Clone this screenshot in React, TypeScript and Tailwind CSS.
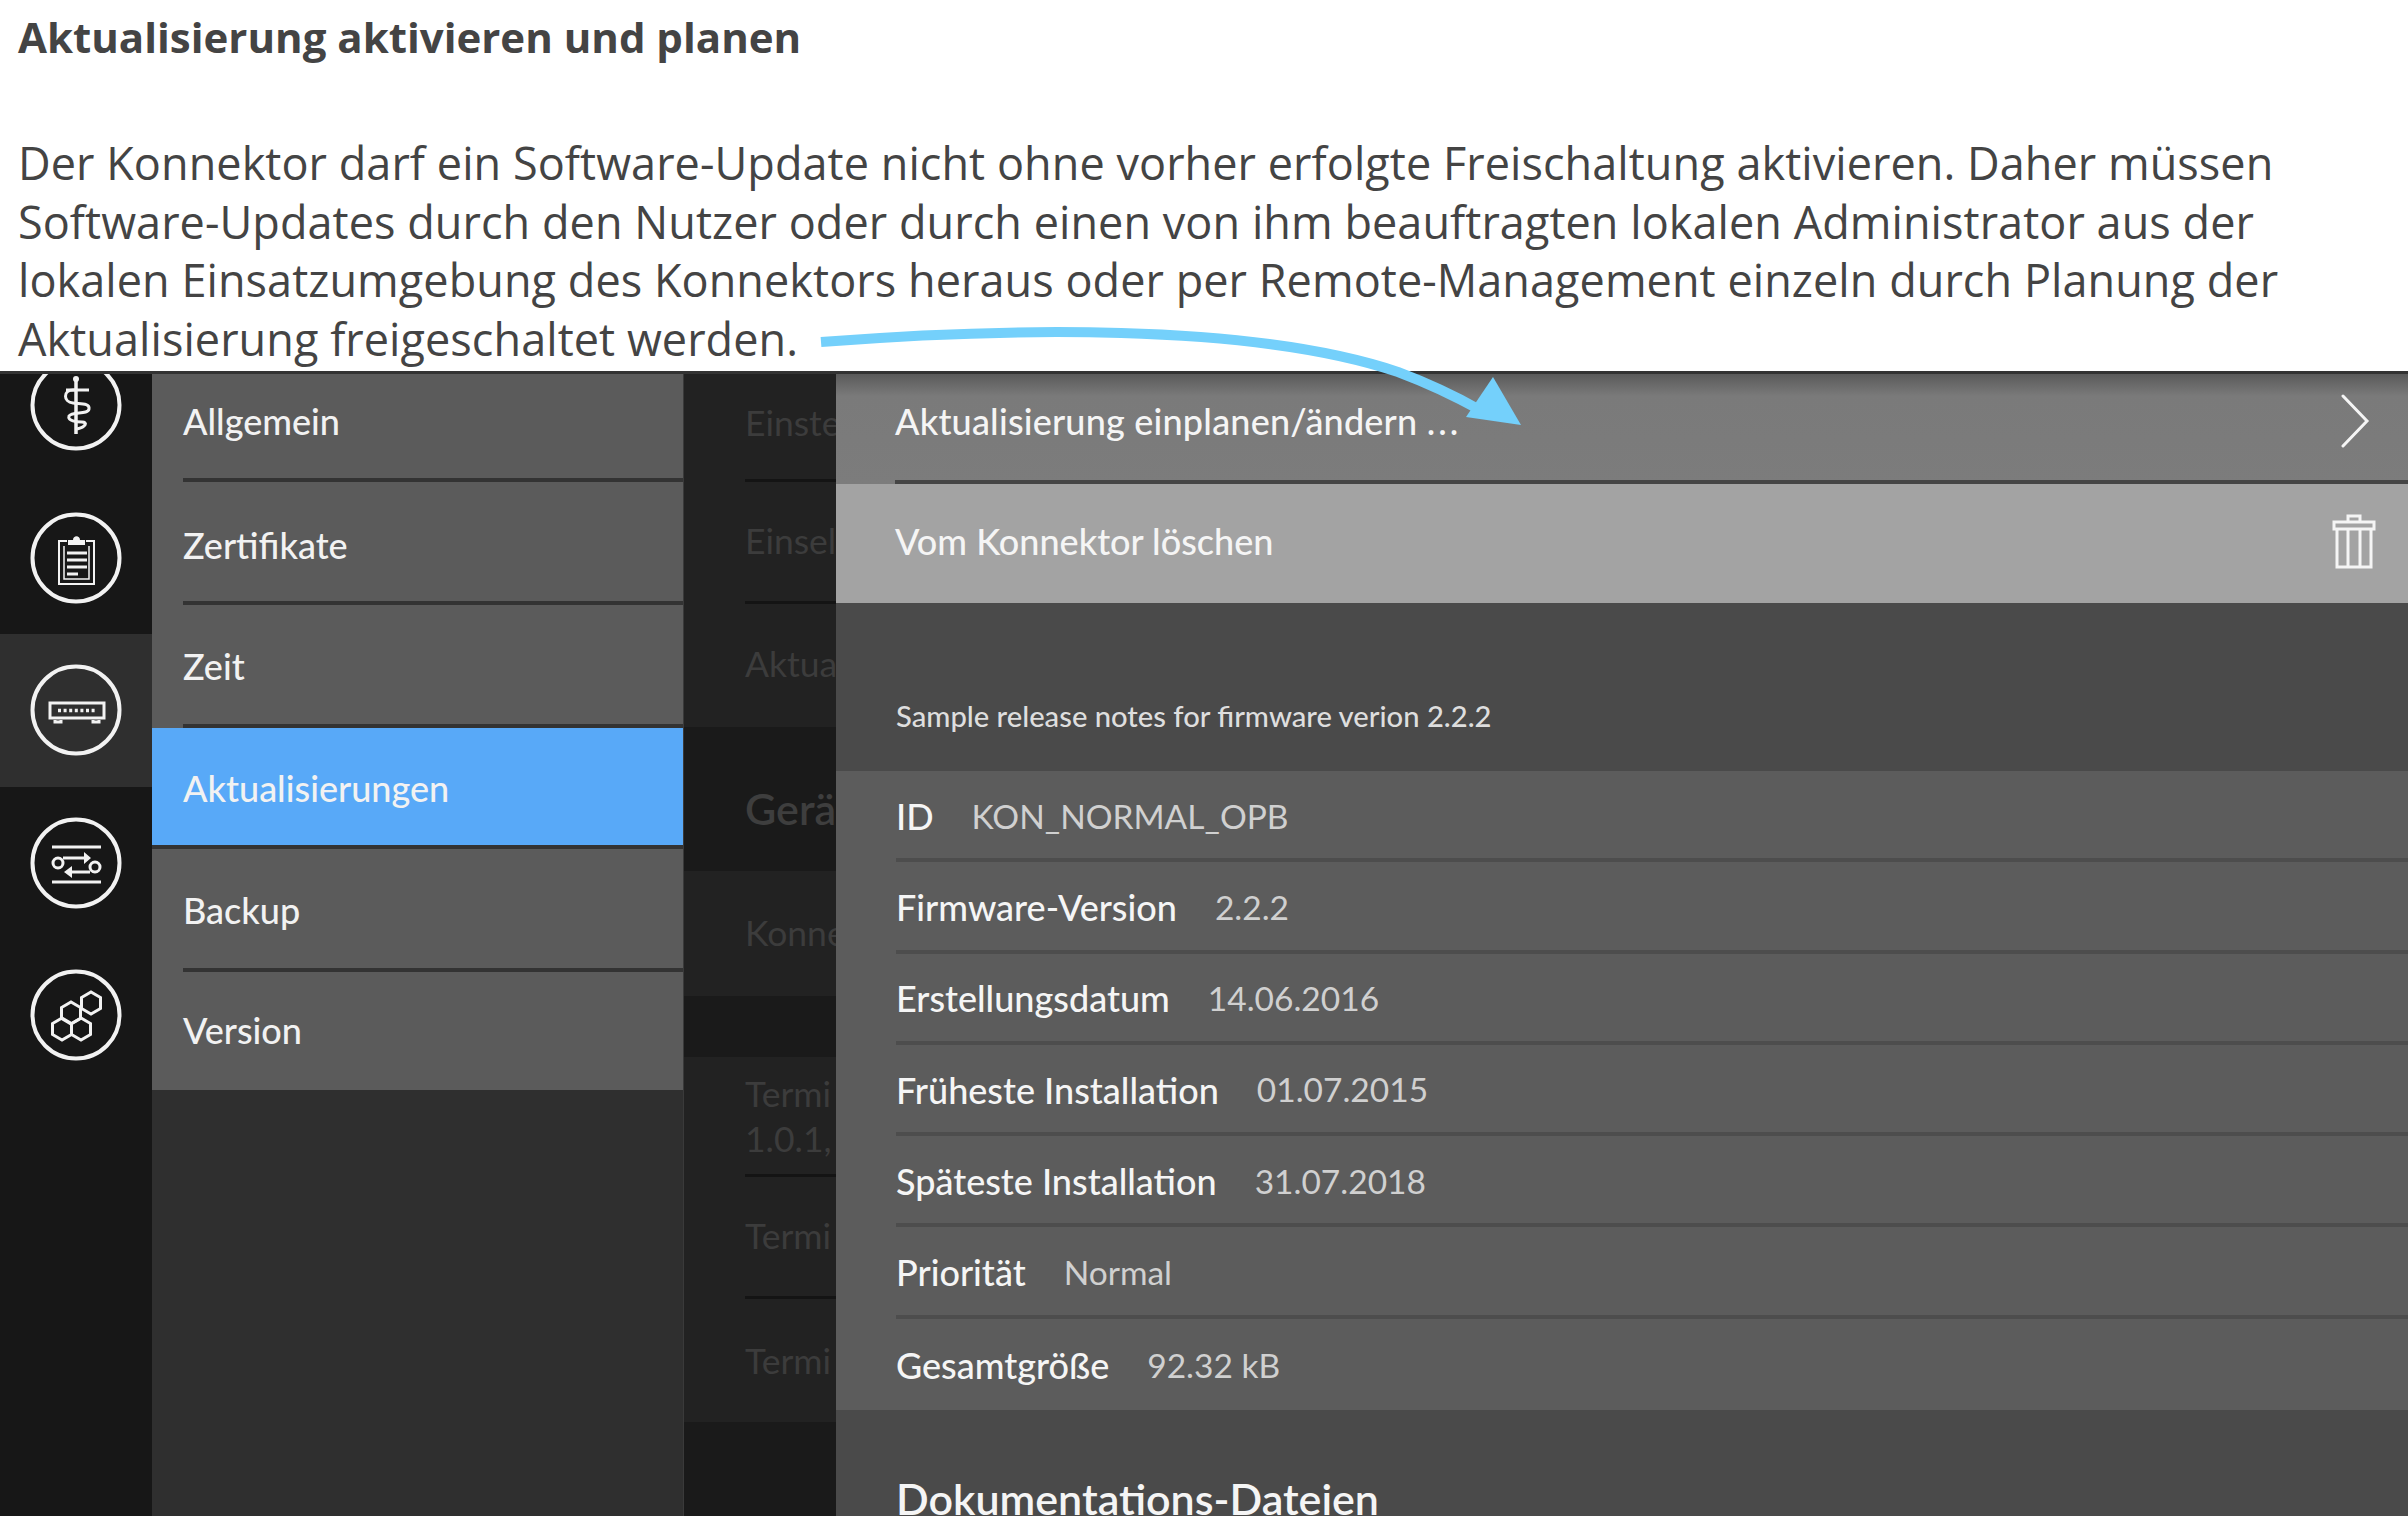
import React from 'react';

const hex = (cx: number, cy: number, r: number) =>
  [0, 60, 120, 180, 240, 300]
    .map((a) => {
      const t = ((a + 30) * Math.PI) / 180;
      return `${(cx + r * Math.cos(t)).toFixed(1)},${(cy + r * Math.sin(t)).toFixed(1)}`;
    })
    .join(' ');

const RailIcon: React.FC<{ children: React.ReactNode }> = ({ children }) => (
  <svg width="92" height="92" viewBox="0 0 92 92" fill="none" stroke="#f2f2f2" strokeWidth="3">
    <circle cx="46" cy="46" r="43.5" strokeWidth="4" />
    {children}
  </svg>
);

const icons = [
  <RailIcon key="med">
    <path d="M46 20v55" strokeWidth="3.5" />
    <circle cx="46" cy="20" r="3" fill="#f2f2f2" stroke="none" />
    <path d="M59 31H43C33 31 33 43 43 44C51 45 60 44 59 50C58 56 42 52 39 57C37 62 47 63 52 63C58 63 56 68 47 70" />
    <path d="M36 31h10" />
  </RailIcon>,
  <RailIcon key="clip">
    <path d="M37 29h-8v43h35V29h-8" strokeWidth="2" />
    <path d="M38 33v-5h5c0-5 7-5 7 0h5v5z" fill="#f2f2f2" stroke="none" />
    <path d="M34 34v33h25V34" strokeWidth="1.500" />
    <path d="M37 41h20M37 48h20M37 55h20M37 62h11" />
  </RailIcon>,
  <RailIcon key="switch">
    <rect x="20" y="39" width="54" height="15" strokeWidth="3" />
    <path d="M25 56v2h6v-2M63 56v2h6v-2" />
    <path d="M28 46.500h38" strokeWidth="3.500" strokeDasharray="3 2.600" />
  </RailIcon>,
  <RailIcon key="route">
    <path d="M22 30h49M22 65h49" />
    <circle cx="28" cy="46" r="5" />
    <circle cx="65" cy="50" r="5" />
    <path d="M33 41h22M60 55H40" />
    <path d="M54 35l7 6-7 6zM42 49l-8 6 8 6z" fill="#f2f2f2" stroke="none" />
  </RailIcon>,
  <RailIcon key="hex">
    <polygon points={hex(61, 34, 11)} />
    <polygon points={hex(41, 44, 11)} />
    <polygon points={hex(32, 60, 11)} />
    <polygon points={hex(51, 60, 11)} />
  </RailIcon>,
];

const menu = [
  { label: 'Allgemein', row: 'h-[108px] bg-[#5b5b5b]', inner: 'border-b-[4px] border-[#333333] pb-[10px]' },
  { label: 'Zertifikate', row: 'h-[123px] bg-[#5b5b5b]', inner: 'border-b-[4px] border-[#333333] pt-[6px]' },
  { label: 'Zeit', row: 'h-[123px] bg-[#5b5b5b]', inner: 'border-b-[4px] border-[#333333] pt-[2px]' },
  { label: 'Aktualisierungen', row: 'h-[121px] bg-[#58a9f8] border-b-[4px] border-[#333333]', inner: 'pt-[2px]' },
  { label: 'Backup', row: 'h-[123px] bg-[#5b5b5b]', inner: 'border-b-[4px] border-[#333333] pt-[2px]' },
  { label: 'Version', row: 'h-[118px] bg-[#5b5b5b]', inner: 'pb-[2px]' },
];

const details = [
  ['ID', 'KON_NORMAL_OPB'],
  ['Firmware-Version', '2.2.2'],
  ['Erstellungsdatum', '14.06.2016'],
  ['Früheste Installation', '01.07.2015'],
  ['Späteste Installation', '31.07.2018'],
  ['Priorität', 'Normal'],
  ['Gesamtgröße', '92.32 kB'],
];

const MiddleRow: React.FC<{ h: string; text: string; line?: boolean; pad?: string }> = ({ h, text, line, pad = 'pb-[3px]' }) => (
  <div className={`${h} pl-[61px] bg-[#222222] overflow-hidden`}>
    <div className={`h-full flex flex-col justify-center ${pad} text-[35.500px] leading-[45px] text-[#3c3c3c] whitespace-pre ${line ? 'border-b-[3px] border-[#141414]' : ''}`}>
      {text}
    </div>
  </div>
);

export default function App() {
  return (
    <div className="relative w-[2408px] h-[1516px] overflow-hidden flex flex-col bg-white font-['Lato',sans-serif]">
      <div className="h-[371px] shrink-0 pl-[18px] pt-[11px] text-[#444444] font-['Open_Sans',sans-serif]">
        <h1 className="text-[42px] leading-[52px] font-bold">Aktualisierung aktivieren und planen</h1>
        <p className="mt-[71px] text-[45px] leading-[58.700px] tracking-[0.06px] whitespace-pre">
          {'Der Konnektor darf ein Software-Update nicht ohne vorher erfolgte Freischaltung aktivieren. Daher müssen\nSoftware-Updates durch den Nutzer oder durch einen von ihm beauftragten lokalen Administrator aus der\nlokalen Einsatzumgebung des Konnektors heraus oder per Remote-Management einzeln durch Planung der\nAktualisierung freigeschaltet werden.'}
        </p>
      </div>

      <div className="flex-1 flex overflow-hidden border-t-[3px] border-[#333333] min-h-0">
        {/* icon rail */}
        <div className="w-[152px] shrink-0 bg-[#171717] -mt-[45px]">
          {icons.map((icon, i) => (
            <div key={i} className={`h-[152.500px] flex items-center justify-center ${i === 2 ? 'bg-[#2f2f2f]' : ''}`}>
              {icon}
            </div>
          ))}
        </div>

        {/* menu */}
        <div className="w-[532px] shrink-0 bg-[#2f2f2f] border-r-[1px] border-[#3a3a3a]">
          {menu.map((m) => (
            <div key={m.label} className={m.row}>
              <div className={`h-full ml-[31px] flex items-center text-[36px] font-medium text-[#f2f2f2] ${m.inner}`}>
                {m.label}
              </div>
            </div>
          ))}
        </div>

        {/* dimmed list behind the detail panel */}
        <div className="w-[152px] shrink-0 bg-[#1a1a1a] overflow-hidden">
          <MiddleRow h="h-[108px]" text="Einste" line pad="pb-[9px]" />
          <MiddleRow h="h-[122px]" text="Einsel" line />
          <MiddleRow h="h-[123px]" text="Aktua" pad="pb-[5px]" />
          <div className="h-[144px] pl-[61px] pt-[20px] flex items-center text-[43px] font-semibold text-[#3e3e3e] whitespace-pre">Gerä</div>
          <MiddleRow h="h-[125px]" text="Konne" />
          <div className="h-[61px]" />
          <MiddleRow h="h-[120px]" text={'Termi\n1.0.1,'} line pad="pt-[1px]" />
          <MiddleRow h="h-[122px]" text="Termi" line />
          <MiddleRow h="h-[123px]" text="Termi" pad="pb-[1px]" />
        </div>

        {/* detail panel */}
        <div className="flex-1 min-w-0 bg-[#4a4a4a] text-[#f5f5f5] overflow-hidden">
          <div className="h-[110px] pl-[59px] bg-[linear-gradient(#5a5a5a,#7a7a7a_22px,#7c7c7c)]">
            <div className="h-full flex items-center justify-between pr-[38px] pb-[13px] border-b-[4px] border-[#454545]">
              <span className="text-[36px] font-medium tracking-[0.2px]">
                Aktualisierung einplanen/ändern <span className="tracking-[3px]">...</span>
              </span>
              <svg width="30" height="54" viewBox="0 0 30 54" fill="none" stroke="#f5f5f5" strokeWidth="3" strokeLinecap="round">
                <path d="M3 2l24 25L3 52" />
              </svg>
            </div>
          </div>
          <div className="h-[119px] pl-[59px] pr-[32px] pb-[5px] bg-[#a3a3a3] flex items-center justify-between">
            <span className="text-[36px] font-medium">Vom Konnektor löschen</span>
            <svg width="44" height="56" viewBox="0 0 44 56" fill="none" stroke="#f5f5f5" strokeWidth="3">
              <path d="M2 16V9h40v7zM16 8V3h12v5" />
              <path d="M5 16v38h34V16M16 16v38M28 16v38" />
            </svg>
          </div>
          <div className="h-[168px] pl-[60px] pt-[93px] text-[29.200px] leading-[40px] font-medium text-[#dedede]">
            Sample release notes for firmware verion 2.2.2
          </div>
          <div className="bg-[#5c5c5c]">
            {details.map(([k, v], i) => (
              <div key={k} className="h-[91.300px] pl-[60px]">
                <div className={`h-full flex items-center gap-[38px] pt-[2px] ${i < 6 ? 'border-b-[4px] border-[#4d4d4d]' : ''}`}>
                  <span className="text-[36px] font-medium">{k}</span>
                  <span className="text-[33.500px] text-[#d0d0d0]">{v}</span>
                </div>
              </div>
            ))}
          </div>
          <h2 className="pl-[60px] pt-[63px] text-[43px] leading-[52px] font-semibold whitespace-nowrap">Dokumentations-Dateien</h2>
        </div>
      </div>

      {/* annotation arrow */}
      <svg className="absolute left-0 top-0 pointer-events-none" width="2408" height="500" viewBox="0 0 2408 500" fill="none">
        <path d="M821 342C1000 328 1250 322 1398 372C1430 384 1455 396 1480 410" stroke="#74d0fb" strokeWidth="10" />
        <polygon points="1521,425 1493,377 1466,417" fill="#74d0fb" />
      </svg>
    </div>
  );
}
